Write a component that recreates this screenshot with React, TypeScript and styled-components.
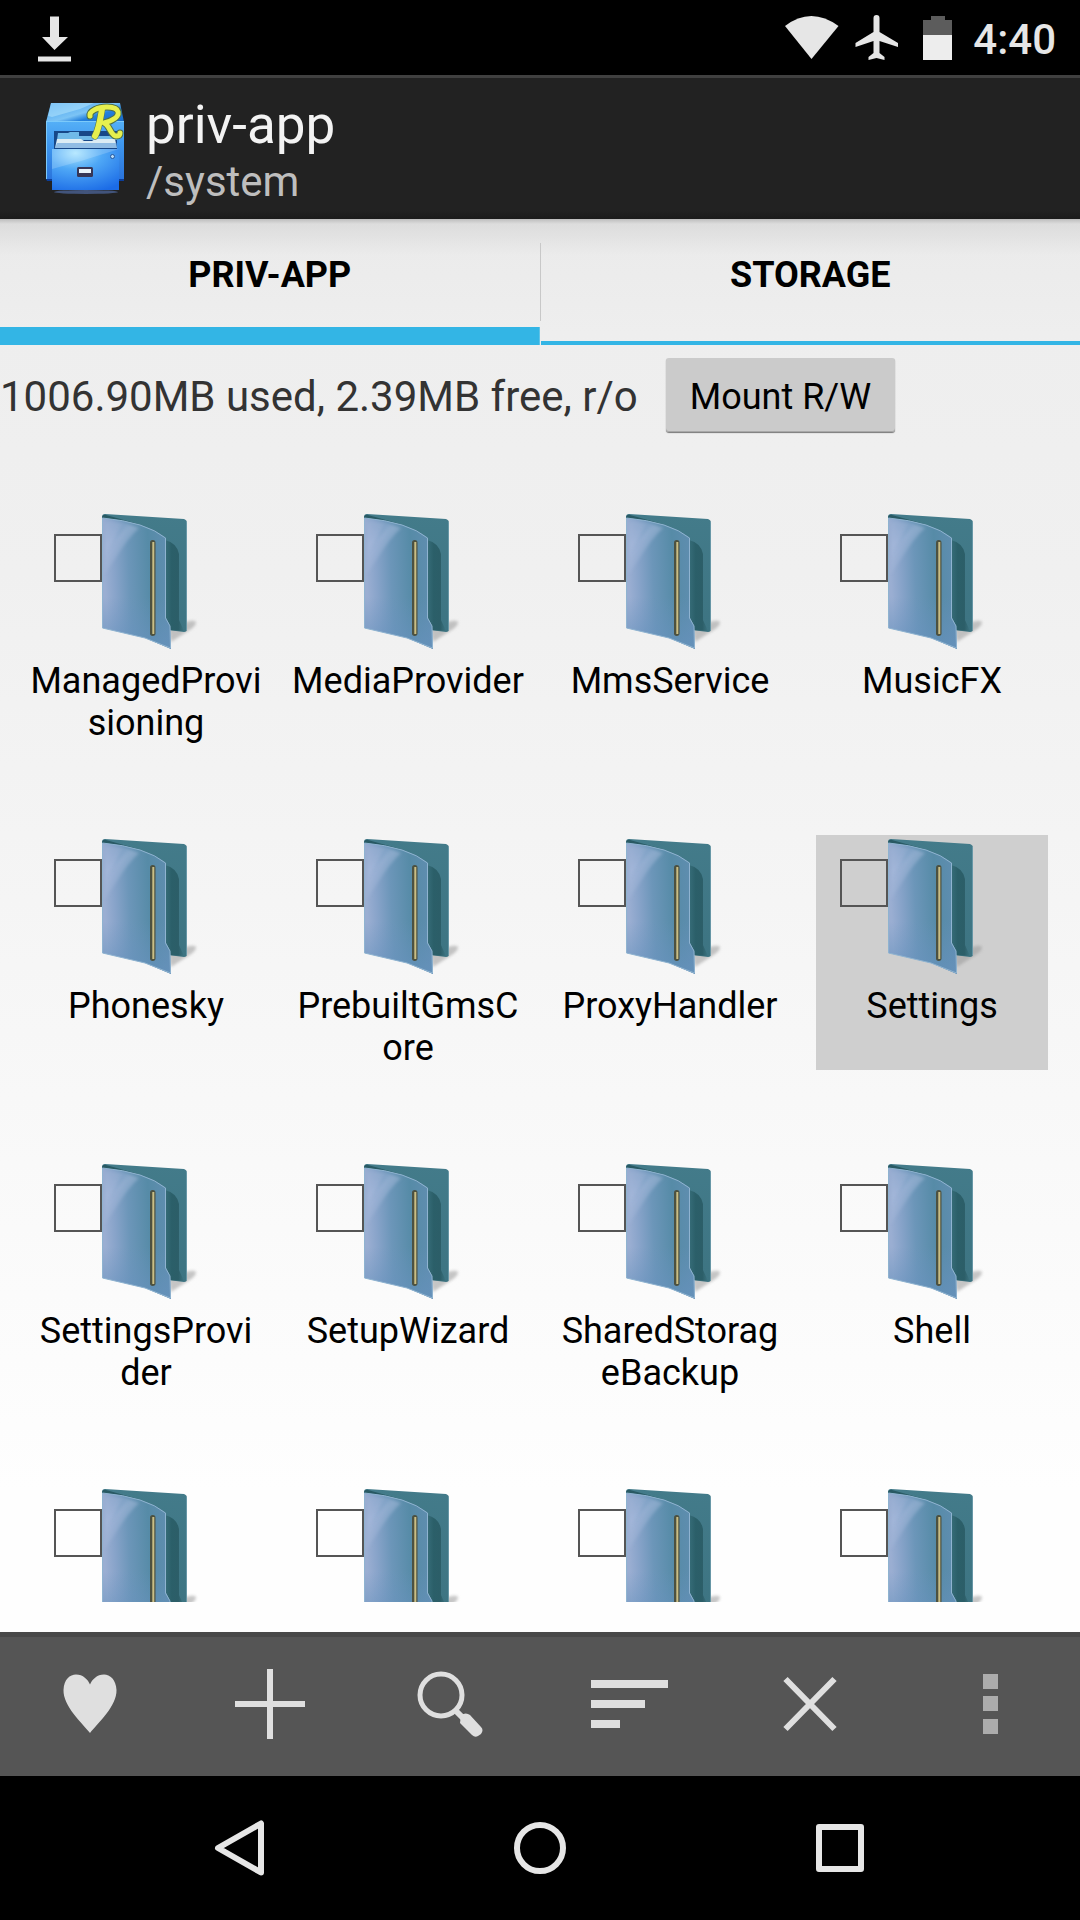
import React, { useState } from "react";
import styled, { createGlobalStyle } from "styled-components";

const GlobalStyle = createGlobalStyle`
  *, *::before, *::after { box-sizing: border-box; }
  body { margin: 0; font-family: Roboto, "Noto Sans", sans-serif; background: #000; }
  button { font-family: inherit; border: 0; padding: 0; margin: 0; cursor: pointer; }
  svg { display: block; flex: none; }
`;

const Screen = styled.div`
  height: 100vh;
  display: flex;
  flex-direction: column;
  overflow: hidden;
`;

const StatusBar = styled.div`
  flex: none;
  height: 75px;
  padding: 0 24px 0 36px;
  display: flex;
  align-items: center;
  justify-content: space-between;
  background: #000;
  color: #e6e6e6;
`;

const StatusIcons = styled.div`
  display: flex;
  align-items: center;
`;

const Clock = styled.time`
  margin-left: 19px;
  padding-top: 4px;
  font-size: 42px;
  line-height: 48px;
  font-weight: 500;
`;

const Header = styled.header`
  flex: none;
  height: 144px;
  padding: 16px 42px 0;
  border-top: 3px solid #404040;
  display: flex;
  align-items: flex-start;
  gap: 14px;
  background: linear-gradient(#222 0 132px, #1b1b1b);
`;

const Title = styled.h1`
  margin: 0;
  font-size: 53px;
  line-height: 63px;
  font-weight: 400;
  color: #f3f3f3;
`;

const Subtitle = styled.p`
  margin: 0;
  font-size: 42px;
  line-height: 49px;
  color: #bebebe;
`;

const Content = styled.main`
  flex: 1;
  min-height: 0;
  display: flex;
  flex-direction: column;
  background:
    linear-gradient(#bdbdbd, rgba(215, 215, 215, 0.7) 5px, rgba(230, 230, 230, 0)) top / 100% 36px no-repeat,
    linear-gradient(#eaeaea, #eeeeee 8%, #f0f0f0 25%, #fefefe 90%);
`;

const Tabs = styled.div`
  flex: none;
  display: flex;
  height: 126px;
`;

const TabDivider = styled.div`
  width: 1px;
  height: 78px;
  margin-top: 24px;
  background: #c8c8c8;
`;

const Tab = styled.button<{ $active: boolean }>`
  flex: 1;
  display: flex;
  justify-content: center;
  align-items: flex-start;
  padding-top: 35px;
  background: linear-gradient(#33b5e5, #33b5e5) bottom / 100% ${(p) => (p.$active ? 18 : 4)}px no-repeat;
  color: #000;
  font-size: 36px;
  line-height: 42px;
  font-weight: 700;
`;

const MountRow = styled.div`
  flex: none;
  display: flex;
  align-items: center;
  gap: 28px;
  padding: 13px 0 0;
`;

const Usage = styled.span`
  padding-top: 2px;
  font-size: 42px;
  line-height: 49px;
  color: #333;
`;

const MountButton = styled.button`
  height: 74px;
  padding: 3px 24px 0;
  border-radius: 3px;
  background: #cbcbcb;
  box-shadow: inset 0 -1px 0 #a8a8a8, 0 1px 1px rgba(0, 0, 0, 0.5);
  font-size: 36px;
  line-height: 42px;
  color: #000;
`;

const ListArea = styled.div`
  flex: 1;
  min-height: 0;
  padding: 78px 32px 30px 30px;
  display: flex;
`;

const Grid = styled.ul`
  flex: 1;
  margin: 0;
  padding: 0;
  list-style: none;
  overflow: hidden;
  display: grid;
  grid-template-columns: repeat(4, minmax(0, 1fr));
  grid-auto-rows: max-content;
  gap: 90px 30px;
`;

const Tile = styled.li<{ $selected: boolean }>`
  padding-bottom: 1px;
  background: ${(p) => (p.$selected ? "#cfcfcf" : "transparent")};
`;

const TileTop = styled.div`
  display: flex;
  align-items: flex-start;
  padding: 4px 0 8px 24px;
`;

const Check = styled.input`
  appearance: none;
  flex: none;
  width: 48px;
  height: 48px;
  margin: 20px 0 0;
  border: 2px solid #555;

  &:checked {
    background: #33b5e5;
  }
`;

const TileName = styled.label`
  display: block;
  min-height: 84px;
  font-size: 36px;
  line-height: 42px;
  text-align: center;
  word-break: break-all;
  color: #000;
`;

const Toolbar = styled.div`
  flex: none;
  height: 144px;
  display: flex;
  background: linear-gradient(#484848 0 5px, #555 5px);
`;

const ToolButton = styled.button`
  flex: 1;
  display: flex;
  align-items: center;
  justify-content: center;
  background: transparent;
  color: #dfdfdf;
`;

const NavBar = styled.nav`
  flex: none;
  height: 144px;
  padding: 0 90px;
  display: flex;
  background: #000;
`;

const NavButton = styled(ToolButton)`
  color: #e6e6e6;
`;

const DownloadIcon = () => (
  <svg width="36" height="48" viewBox="0 0 36 48" fill="currentColor">
    <path d="M14 2.500h9V23h9L18.500 36 6 23h8z" />
    <path d="M2 42.500h33v5H2z" />
  </svg>
);

const StatusGlyphs = () => (
  <svg width="170" height="48" viewBox="784 13 170 48" fill="currentColor">
    <path d="M785 25Q811 5 838.500 25L811.500 58z" />
    <path d="M873.500 17q0-3 3-3t3 3v14l18.500 11v4l-18.500-6v12l5 4v3l-8-2-8 2v-3l5-4V40L855.500 46v-4l18-11z" />
    <path fill="#5c5c5c" d="M931 15h14v4h7v15h-29V19h8z" />
    <path fill="#ededed" d="M923 34h29v25h-29z" />
  </svg>
);

const CabinetLogo = () => (
  <svg width="90" height="108" viewBox="42 95 90 108" role="img" aria-label="File cabinet">
    <defs>
      <linearGradient id="top" x1="0" y1="0" x2="1" y2="1">
        <stop offset="0" stopColor="#3f9cf0" />
        <stop offset="0.45" stopColor="#7cc4f5" />
        <stop offset="0.6" stopColor="#2480dd" />
        <stop offset="1" stopColor="#1261c2" />
      </linearGradient>
      <linearGradient id="body" x1="0" y1="0" x2="0" y2="1">
        <stop offset="0" stopColor="#55b0f7" />
        <stop offset="0.4" stopColor="#3f97ee" />
        <stop offset="1" stopColor="#2a74dc" />
      </linearGradient>
      <radialGradient id="drawer" cx="0.35" cy="0.1" r="1">
        <stop offset="0" stopColor="#a9e4ff" />
        <stop offset="0.4" stopColor="#4fa8f6" />
        <stop offset="1" stopColor="#1b6be6" />
      </radialGradient>
    </defs>
    <ellipse cx="86" cy="193" rx="32" ry="2" fill="#42547b" />
    <path fill="url(#top)" d="M51 104h69l4 19v4H46v-4z" />
    <path fill="#b5e6fc" opacity=".55" d="M51 104h43l-14 6-28 8-4-1z" />
    <path fill="url(#body)" d="M46 122h78v58H46z" />
    <path fill="#7ccafa" d="M46 122h78v1H46zM46 123h1v57h-1z" />
    <path fill="#174788" d="M54 132h63v18H54z" />
    <path fill="#70b9e8" d="M58 134h10l2-1h9v4h38v4H57z" />
    <path fill="#dcecf4" d="M57 140h24l3 2h8l3-2h20l2 9H55z" />
    <path fill="#448bd3" d="M57 144h60v5H55z" opacity=".5" />
    <path fill="url(#drawer)" d="M52 150h67v41H52z" />
    <path fill="#fff" opacity=".18" d="M52 150h67l-38 12-29 8z" />
    <path fill="#0b3d99" d="M46 180h6v2h-5zM119 180h5v2h-5z" />
    <rect x="77" y="168" width="16" height="10" rx="1.500" fill="#373657" />
    <path fill="#e9f3fb" d="M79 170h12v4H79z" />
    <circle cx="112.500" cy="157.500" r="2" fill="#b8dcf7" stroke="#25569d" />
    <g fill="none" strokeLinecap="round" strokeLinejoin="round">
      <path stroke="#4f7048" strokeWidth="7" d="M102 110c-2 12-3 20-7 27M90 117c-1-5 8-9 17-9 14 0 14 9 5 13-3 2-6 2-8 3 5 1 7 13 12 13 3 0 4-1 4-3" />
      <path stroke="#e6f04e" strokeWidth="6" d="M102 110c-2 12-3 20-7 27" />
      <path stroke="#e6f04e" strokeWidth="5" d="M90 117c-1-5 8-9 17-9 14 0 14 9 5 13-3 2-6 2-8 3 5 1 7 13 12 13 3 0 4-1 4-3" />
    </g>
  </svg>
);

const FolderIcon = () => (
  <svg width="100" height="138" viewBox="0 0 100 138">
    <defs>
      <linearGradient id="front" x1="0" y1="0.1" x2="1" y2="0">
        <stop offset="0" stopColor="#9aaed2" />
        <stop offset="0.15" stopColor="#87a3c9" />
        <stop offset="0.35" stopColor="#6c96b9" />
        <stop offset="0.65" stopColor="#568ba7" />
        <stop offset="1" stopColor="#628eb2" />
      </linearGradient>
      <linearGradient id="foot" x1="0" y1="0" x2="0" y2="1">
        <stop offset="0.6" stopColor="#6792bd" stopOpacity="0" />
        <stop offset="1" stopColor="#6792bd" stopOpacity=".8" />
      </linearGradient>
      <linearGradient id="glow" x1="0" y1="0" x2="0.5" y2="1">
        <stop offset="0" stopColor="#b5c4e4" stopOpacity=".15" />
        <stop offset="0.4" stopColor="#b5c4e4" stopOpacity=".45" />
        <stop offset="1" stopColor="#b5c4e4" stopOpacity="0" />
      </linearGradient>
      <linearGradient id="back" x1="0" y1="0" x2="0" y2="1">
        <stop offset="0" stopColor="#437b8a" />
        <stop offset="1" stopColor="#3d7482" />
      </linearGradient>
      <linearGradient id="shade" x1="0" y1="0" x2="1" y2="0">
        <stop offset="0" stopColor="#376d79" />
        <stop offset="0.35" stopColor="#2b5f69" />
        <stop offset="0.7" stopColor="#2c5e68" />
        <stop offset="1" stopColor="#3d7482" />
      </linearGradient>
      <filter id="soft" x="-30%" y="-30%" width="160%" height="160%">
        <feGaussianBlur stdDeviation="1.500" />
      </filter>
    </defs>
    <path fill="#999" opacity=".55" filter="url(#soft)" d="M69 128L66 114 84 108q10-3 10 1-1 4-8 8z" />
    <path fill="url(#back)" d="M0 3Q0 0 3 0L82 5q3 1 3 4v106q0 3-3 3l-16-2L0 95z" />
    <path fill="#285963" d="M0 3Q1 0 4 1l32 9L2 6z" />
    <path fill="url(#shade)" d="M63 26q12 3 14 14v66l5 11-14-1-5-12z" />
    <path stroke="#78a5b5" strokeWidth=".7" d="M84.500 8v108" />
    <path fill="url(#front)" d="M.5 4Q44 8 64 24v80l4 8 1 23L43 124 .5 114z" />
    <path fill="url(#foot)" d="M.5 4Q44 8 64 24v80l4 8 1 23L43 124 .5 114z" />
    <path fill="url(#glow)" filter="url(#soft)" d="M8 7q18 2 29 7Q27 23 15 42L3 60V8z" />
    <path fill="#7199bf" opacity=".3" filter="url(#soft)" d="M20 9l6 2Q14 23 6 40z" />
    <path fill="none" stroke="#8fb3d0" d="M.5 4Q44 8 63.500 24v80l4.500 8 .5 22L43 124 .5 114z" />
    <rect x="48" y="26" width="5.500" height="96" rx="2.700" fill="#4c5140" />
    <path stroke="#c9be85" strokeWidth="2" d="M51.300 28v92" />
  </svg>
);

const HeartIcon = () => (
  <svg width="96" height="96" viewBox="0 0 96 96" fill="currentColor">
    <path d="M48 77C40 67 21 50 21.500 34 22 23 28 18.500 34 18.500c7 0 12 5 14 10 2-5 7-10 14-10 6 0 12 5 12.500 15.500C75 50 56 67 48 77z" />
  </svg>
);

const PlusIcon = () => (
  <svg width="96" height="96" viewBox="0 0 96 96" fill="currentColor">
    <path d="M45 13h6v32h32v6H51v32h-6V51H13v-6h32z" />
  </svg>
);

const SearchIcon = () => (
  <svg width="96" height="96" viewBox="0 0 96 96" fill="none" stroke="currentColor">
    <circle cx="39" cy="39" r="21" strokeWidth="5" />
    <path strokeWidth="6" d="M53 54l8 8" />
    <path fill="currentColor" stroke="none" d="M59 59q5-3 9 0l11 12q3 3 0 7l-3 2q-3 2-6-1L58 67z" />
  </svg>
);

const SortIcon = () => (
  <svg width="96" height="96" viewBox="0 0 96 96" fill="currentColor">
    <path d="M9 24h77v8H9zM9 44h54v8H9zM9 64h29v8H9z" />
  </svg>
);

const CloseIcon = () => (
  <svg width="96" height="96" viewBox="0 0 96 96" stroke="currentColor" strokeWidth="6">
    <path d="M23.500 23l49 50M72.500 23l-49 50" />
  </svg>
);

const MoreIcon = () => (
  <svg width="96" height="96" viewBox="0 0 96 96" fill="#acacac">
    <path d="M41 18h15v15H41zM41 40h15v15H41zM41 63h15v15H41z" />
  </svg>
);

const BackIcon = () => (
  <svg width="72" height="72" viewBox="0 0 72 72" fill="none" stroke="currentColor" strokeWidth="6" strokeLinejoin="round">
    <path d="M57 11.500v49L14 36z" />
  </svg>
);

const HomeIcon = () => (
  <svg width="72" height="72" viewBox="0 0 72 72" fill="none" stroke="currentColor" strokeWidth="6">
    <circle cx="36" cy="36" r="23" />
  </svg>
);

const RecentsIcon = () => (
  <svg width="72" height="72" viewBox="0 0 72 72" fill="none" stroke="currentColor" strokeWidth="6" strokeLinejoin="round">
    <path d="M15 15h42v42H15z" />
  </svg>
);

const folders = [
  "ManagedProvisioning",
  "MediaProvider",
  "MmsService",
  "MusicFX",
  "Phonesky",
  "PrebuiltGmsCore",
  "ProxyHandler",
  "Settings",
  "SettingsProvider",
  "SetupWizard",
  "SharedStorageBackup",
  "Shell",
  "",
  "",
  "",
  "",
];

const tabs = ["PRIV-APP", "STORAGE"];

const tools = [
  { name: "Favorites", Icon: HeartIcon },
  { name: "New", Icon: PlusIcon },
  { name: "Search", Icon: SearchIcon },
  { name: "Sort", Icon: SortIcon },
  { name: "Close", Icon: CloseIcon },
  { name: "More options", Icon: MoreIcon },
];

const navItems = [
  { name: "Back", Icon: BackIcon },
  { name: "Home", Icon: HomeIcon },
  { name: "Recent apps", Icon: RecentsIcon },
];

export default function App() {
  const [activeTab, setActiveTab] = useState(0);

  return (
    <>
      <GlobalStyle />
      <Screen>
        <StatusBar>
          <DownloadIcon />
          <StatusIcons>
            <StatusGlyphs />
            <Clock>4:40</Clock>
          </StatusIcons>
        </StatusBar>
        <Header>
          <CabinetLogo />
          <div>
            <Title>priv-app</Title>
            <Subtitle>/system</Subtitle>
          </div>
        </Header>
        <Content>
          <Tabs role="tablist">
            {tabs.map((name, i) => (
              <React.Fragment key={name}>
                {i > 0 && <TabDivider />}
                <Tab role="tab" aria-selected={i === activeTab} $active={i === activeTab} onClick={() => setActiveTab(i)}>
                  {name}
                </Tab>
              </React.Fragment>
            ))}
          </Tabs>
          <MountRow>
            <Usage>1006.90MB used, 2.39MB free, r/o</Usage>
            <MountButton>Mount R/W</MountButton>
          </MountRow>
          <ListArea>
            <Grid>
              {folders.map((name, i) => (
                <Tile key={i} $selected={name === "Settings"}>
                  <TileTop>
                    <Check type="checkbox" id={`folder-${i}`} aria-label={name || "Folder"} />
                    <FolderIcon />
                  </TileTop>
                  <TileName htmlFor={`folder-${i}`}>{name}</TileName>
                </Tile>
              ))}
            </Grid>
          </ListArea>
        </Content>
        <Toolbar role="toolbar">
          {tools.map(({ name, Icon }) => (
            <ToolButton key={name} aria-label={name}>
              <Icon />
            </ToolButton>
          ))}
        </Toolbar>
        <NavBar>
          {navItems.map(({ name, Icon }) => (
            <NavButton key={name} aria-label={name}>
              <Icon />
            </NavButton>
          ))}
        </NavBar>
      </Screen>
    </>
  );
}
